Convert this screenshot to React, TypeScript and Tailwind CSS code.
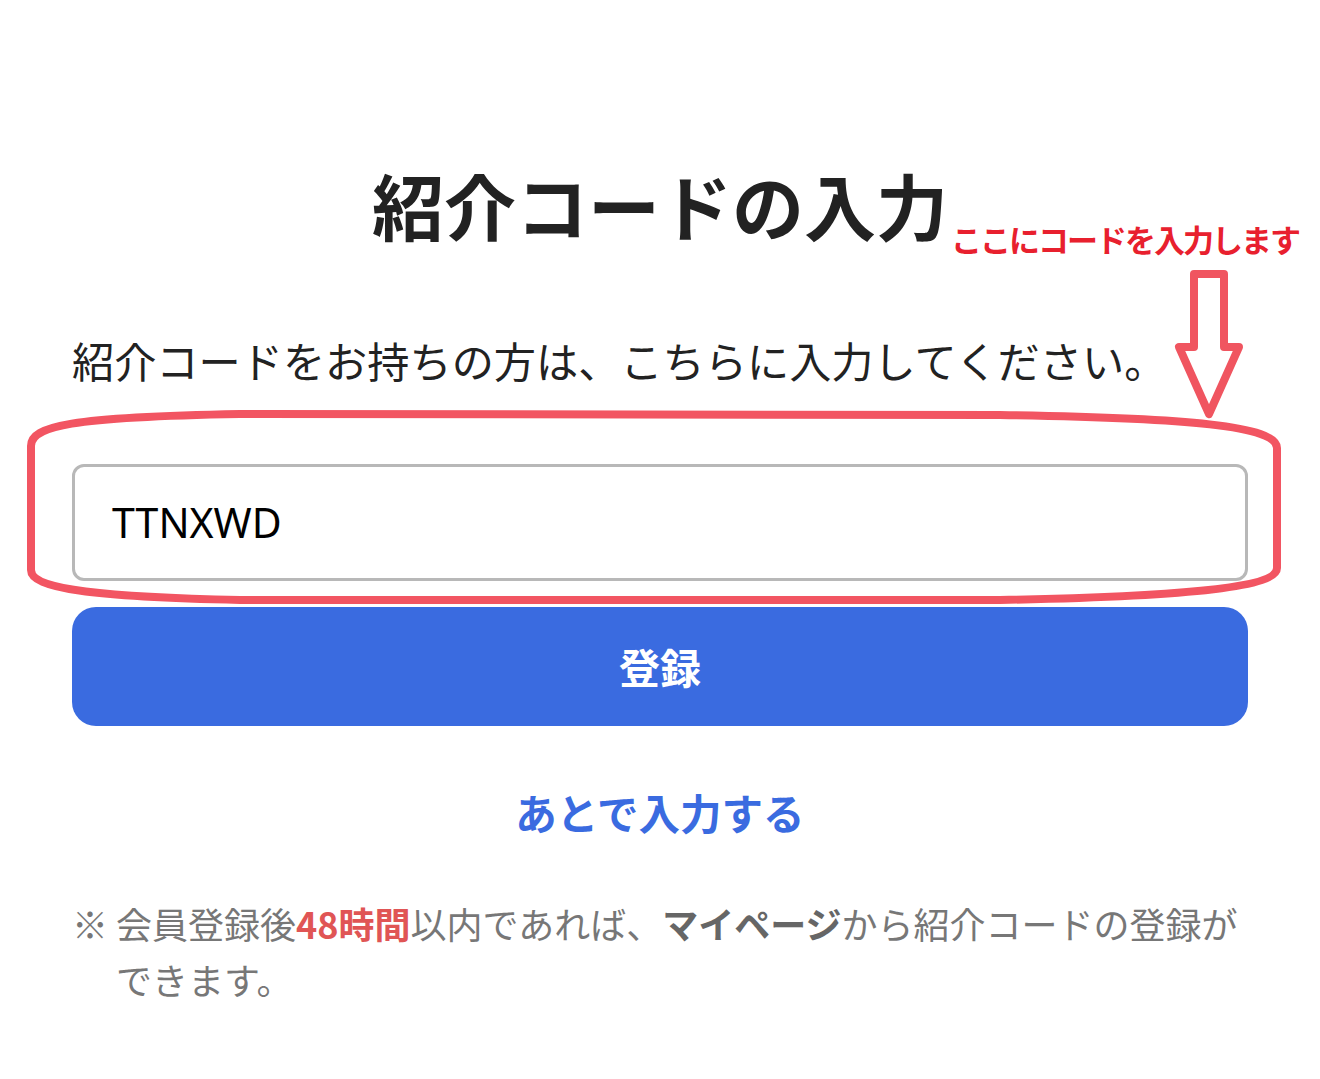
import React from "react";

export default function App() {
  return (
    <div className="relative w-[1320px] h-[1079px] bg-white overflow-hidden font-['Noto_Sans_CJK_JP','Noto_Sans',sans-serif]">
      <div className="flex flex-col px-[72px] pt-[168px]">
        <h1 className="text-center text-[72px] leading-none font-bold text-[#222222]">
          紹介コードの入力
        </h1>
        <p className="mt-[99px] text-[42.2px] leading-none text-[#222222] whitespace-nowrap">
          紹介コードをお持ちの方は、こちらに入力してください。
        </p>
        <div className="mt-[83px] h-[117px] rounded-[12px] border-[3px] border-[#b8b8b8] flex items-center pl-[37px]">
          <span className="font-['Noto_Sans',sans-serif] text-[41px] text-black leading-none">TTNXWD</span>
        </div>
        <button className="mt-[26px] h-[119px] rounded-[24px] bg-[#3a6be0] text-white text-[41px] font-bold leading-none flex items-center justify-center">
          登録
        </button>
        <div className="mt-[66px] text-center text-[41.5px] leading-none font-bold text-[#3a6be0]">
          あとで入力する
        </div>
        <div className="mt-[61px] flex text-[36px] leading-[56px] text-[#777777]">
          <span className="w-[44px] shrink-0">※</span>
          <p>
            会員登録後<span className="font-bold text-[#e05555]">48時間</span>以内であれば、<span className="font-bold text-[#666666]">マイページ</span>から紹介コードの登録ができます。
          </p>
        </div>
      </div>

      <div className="absolute left-[951px] top-[223px] text-[31px] tracking-[-2px] leading-none font-bold text-[#e8202e] whitespace-nowrap">
        ここにコードを入力します
      </div>

      <svg className="absolute inset-0 pointer-events-none" width="1320" height="1079" viewBox="0 0 1320 1079">
        <path
          d="M1194,274 L1224,274 L1224,347 L1239,347 L1209,414 L1179,347 L1194,347 Z"
          fill="none"
          stroke="#f05560"
          strokeWidth="8"
          strokeLinejoin="round"
        />
        <path
          d="M31,446 C31,426 70,417 240,414 L1000,415 C1190,418 1277,426 1277,448 L1277,568 C1277,586 1200,596 1000,600 L240,600 C90,597 31,588 31,570 Z"
          fill="none"
          stroke="#f25562"
          strokeWidth="8"
          strokeLinejoin="round"
        />
      </svg>
    </div>
  );
}
